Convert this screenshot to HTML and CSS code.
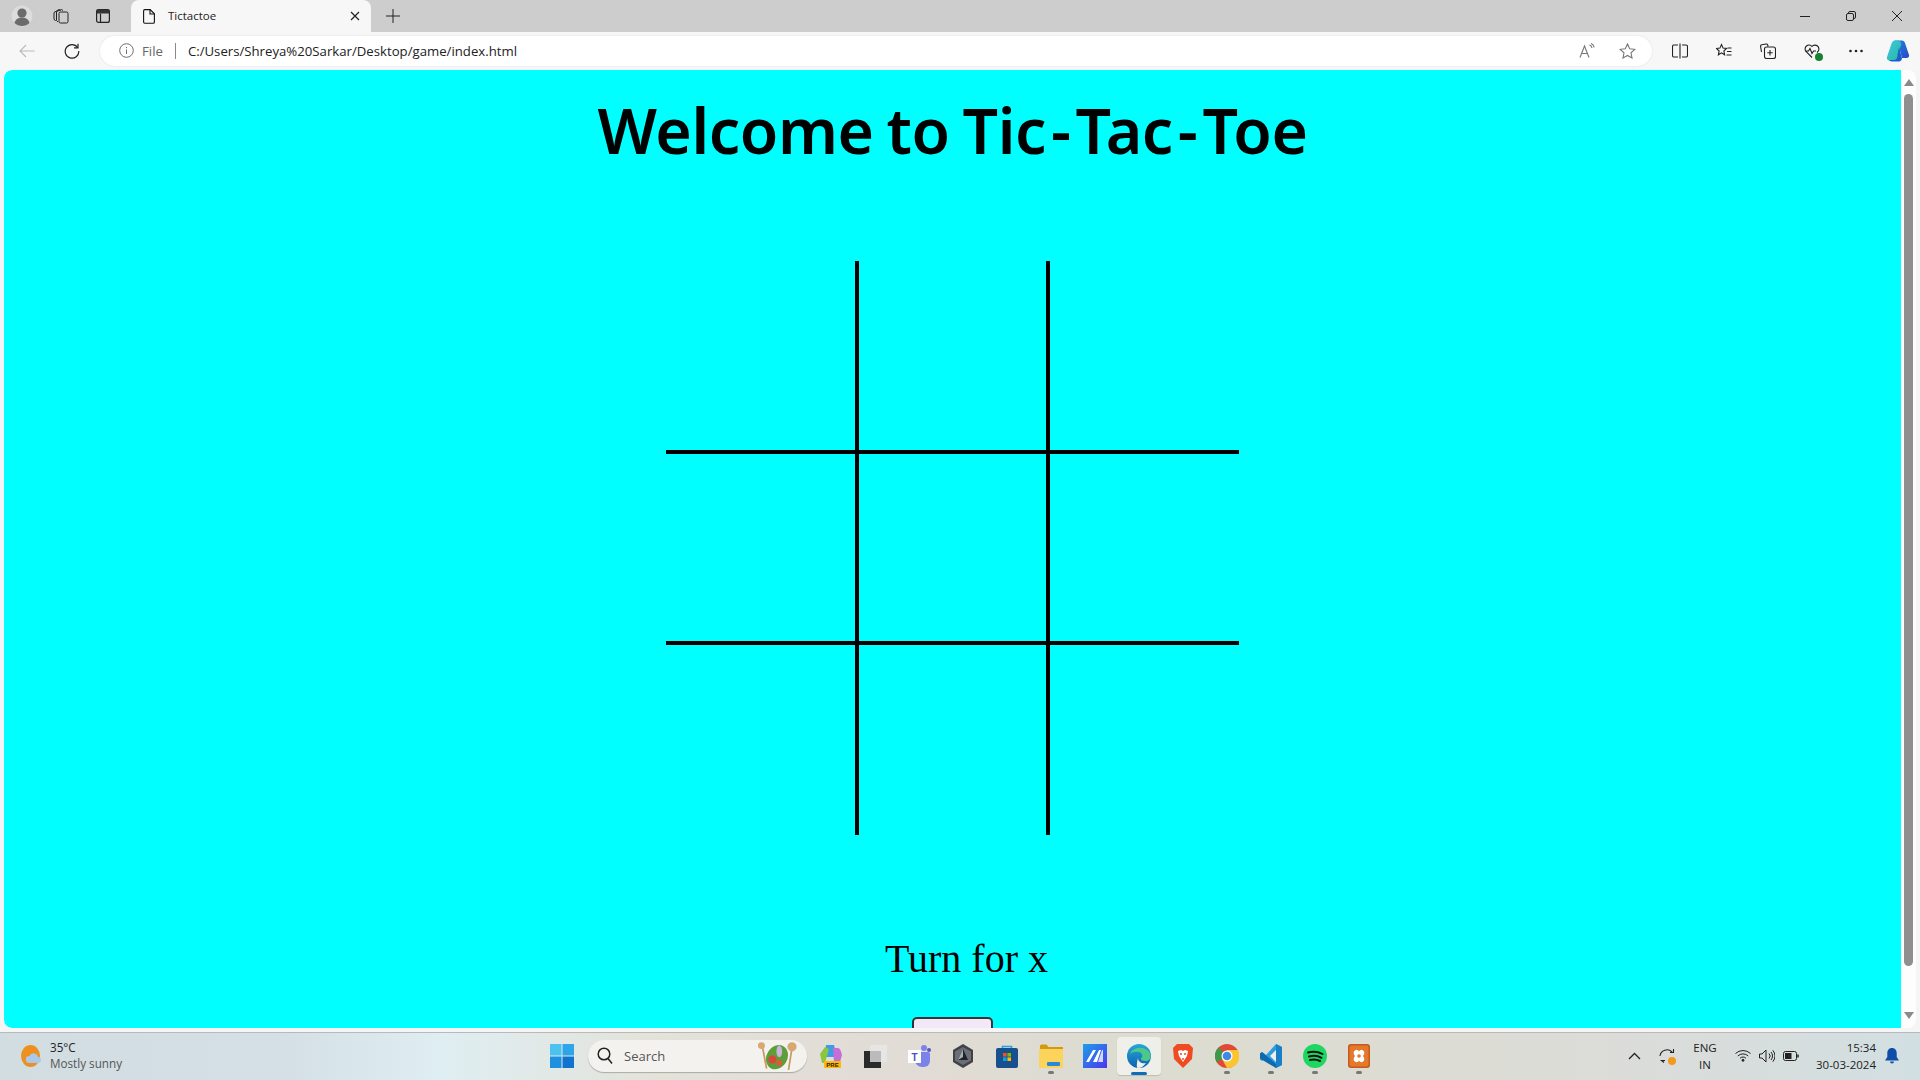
FILE: index.html
```html
<!DOCTYPE html>
<html lang="en">
<head>
    <meta charset="UTF-8">
    <meta name="viewport" content="width=device-width, initial-scale=1.0">
    <title>Tictactoe</title>
    <link rel="stylesheet" href="styles.css">
</head>
<body>
    <!-- tab strip -->
    <div class="tabstrip">
        <div class="strip-left">
            <span class="avatar">
                <svg width="22" height="22" viewBox="0 0 22 22"><circle cx="11" cy="11" r="10.500" fill="#dcdcdc"/><circle cx="11" cy="8" r="4.600" fill="#6b6b6b"/><path d="M3.500 18c1-4 4-5.500 7.500-5.500s6.500 1.500 7.500 5.500c-2 2-4.500 3-7.500 3s-5.500-1-7.500-3z" fill="#6b6b6b"/></svg>
            </span>
            <span class="strip-btn">
                <svg width="16" height="16" viewBox="0 0 16 16" fill="none" stroke="#222" stroke-width="1"><path d="M1 4.500l5-3 1.500 1"/><path d="M1 4.500v6.500l1.500 2"/><path d="M3.500 3.500l5-2 1.500 1"/><path d="M3.500 3.500v9l1.500 1.500"/><rect x="6" y="4" width="9" height="11" rx="1.500"/></svg>
            </span>
            <span class="strip-btn">
                <svg width="14" height="14" viewBox="0 0 14 14" fill="none" stroke="#222" stroke-width="1.200"><rect x=".6" y=".6" width="12.800" height="12.800" rx="2"/><path d="M4.500 4.500V13.400"/><rect x=".6" y=".6" width="12.800" height="3.900" fill="#333" stroke="none"/></svg>
            </span>
        </div>
        <div class="tab">
            <svg width="12" height="15" viewBox="0 0 12 15" fill="none" stroke="#111" stroke-width="1.100"><path d="M1.800.6h5.400l4.200 4.200v8.200a1.300 1.300 0 0 1-1.300 1.300H1.800A1.300 1.300 0 0 1 .6 13V1.900A1.300 1.300 0 0 1 1.800.6z"/><path d="M7 .8v4.200h4.200"/></svg>
            <span class="tab-title">Tictactoe</span>
            <svg class="tab-close" width="10" height="10" viewBox="0 0 10 10" stroke="#222" stroke-width="1.200"><path d="M1 1l8 8M9 1l-8 8"/></svg>
        </div>
        <span class="new-tab">
            <svg width="14" height="14" viewBox="0 0 14 14" stroke="#222" stroke-width="1"><path d="M7 0v14M0 7h14"/></svg>
        </span>
        <div class="win-controls">
            <svg width="10" height="10" viewBox="0 0 10 10" stroke="#222" stroke-width="1"><path d="M0 5.500h10"/></svg>
            <svg width="10" height="10" viewBox="0 0 10 10" fill="none" stroke="#222" stroke-width="1"><rect x=".5" y="2.500" width="7" height="7" rx="1.500"/><path d="M2.500 2.500V2a1.500 1.500 0 0 1 1.500-1.500h4A1.500 1.500 0 0 1 9.500 2v4a1.500 1.500 0 0 1-1.500 1.500h-.5"/></svg>
            <svg width="10" height="10" viewBox="0 0 10 10" stroke="#222" stroke-width="1"><path d="M0 0l10 10M10 0L0 10"/></svg>
        </div>
    </div>

    <!-- toolbar -->
    <div class="toolbar">
        <span class="tool-btn">
            <svg width="16" height="14" viewBox="0 0 16 14" fill="none" stroke="#b9b9b9" stroke-width="1.100"><path d="M15.500 7H1M7 1L1 7l6 6"/></svg>
        </span>
        <span class="tool-btn">
            <svg width="16" height="16" viewBox="0 0 16 16" fill="none" stroke="#222" stroke-width="1.200"><path d="M13.600 4.500A6.800 6.800 0 1 0 14.800 8"/><path d="M14 .8v4h-4"/></svg>
        </span>
        <div class="addressbar">
            <svg class="info-icon" width="15" height="15" viewBox="0 0 15 15" fill="none" stroke="#6f6f6f" stroke-width="1"><circle cx="7.500" cy="7.500" r="6.800"/><path d="M7.500 6.500v4.500M7.500 4v1.200"/></svg>
            <span class="scheme">File</span>
            <span class="divider"></span>
            <span class="url">C:/Users/Shreya%20Sarkar/Desktop/game/index.html</span>
            <span class="address-actions">
                <svg width="16" height="16" viewBox="0 0 16 16" fill="none" stroke="#777" stroke-width="1.100"><path d="M1 14.500L5.500 3l4.500 11.500M2.700 10.500h5.600"/><path d="M10.500 2c1.500.5 2.300 1.500 2.500 3M12 .5c1.800.7 2.800 2 3.200 3.800"/></svg>
                <svg width="17" height="16" viewBox="0 0 17 16" fill="none" stroke="#777" stroke-width="1.100"><path d="M8.500 1l2.200 4.700 5.100.6-3.800 3.500 1 5.100-4.500-2.500-4.500 2.500 1-5.100L1.200 6.300l5.100-.6z"/></svg>
            </span>
        </div>
        <div class="toolbar-icons">
            <svg width="16" height="16" viewBox="0 0 16 16" fill="none" stroke="#222" stroke-width="1.100"><path d="M6 2H2a1.500 1.500 0 0 0-1.500 1.500v9A1.500 1.500 0 0 0 2 14h4M10 2h4a1.500 1.500 0 0 1 1.500 1.500v9A1.500 1.500 0 0 1 14 14h-4M8 .5v15"/></svg>
            <svg width="16" height="16" viewBox="0 0 16 16" fill="none" stroke="#222" stroke-width="1.100"><path d="M5.500 1.500l1.600 3.600 3.400.4-2.600 2.500.7 3.800-3.100-1.900-3.100 1.900.7-3.800L.5 5.500l3.400-.4zM11.500 5h4M11 8.500h4.500M10.500 12h5"/></svg>
            <svg width="16" height="16" viewBox="0 0 16 16" fill="none" stroke="#222" stroke-width="1.100"><path d="M1.500 9L.6 3.500a1.500 1.500 0 0 1 1.200-1.700L6 1a1.500 1.500 0 0 1 1.700 1l.4 1.500"/><rect x="4.500" y="4" width="11" height="11.500" rx="2" fill="#f7f7f7"/><path d="M10 7v5.500M7.300 9.800h5.400"/></svg>
            <span class="health">
                <svg width="16" height="16" viewBox="0 0 16 16" fill="none" stroke="#222" stroke-width="1.100"><path d="M8 14.500L2 8.500A3.900 3.900 0 0 1 8 3.500a3.900 3.900 0 0 1 6 5L13 9.500M1 8h3.500L6 5.500 8 10.500 9.500 8H12"/></svg>
                <span class="health-badge"></span>
            </span>
            <svg width="16" height="16" viewBox="0 0 16 16" fill="#222"><circle cx="2.500" cy="8" r="1.300"/><circle cx="8" cy="8" r="1.300"/><circle cx="13.500" cy="8" r="1.300"/></svg>
        </div>
        <svg class="copilot" width="24" height="24" viewBox="0 0 24 24">
            <defs>
                <linearGradient id="copA" x1="0" y1="0" x2="1" y2="1"><stop offset="0" stop-color="#3ec8e8"/><stop offset="1" stop-color="#29b89a"/></linearGradient>
                <linearGradient id="copB" x1="0" y1="0" x2="1" y2="1"><stop offset="0" stop-color="#1f8ce0"/><stop offset="1" stop-color="#2a45c8"/></linearGradient>
            </defs>
            <path d="M9 1.500h7c1.500 0 2.500 1 3 2.500l4 12c.5 2-1 3-2.500 3H16L13 8c-.5-1.500-1.500-2-3-2H6z" fill="url(#copB)"/>
            <path d="M9 1.500C7 1.500 6 3 5.500 4.500L1 18c-.5 2 .5 3.500 2.500 3.500H8c1.500 0 2.500-1 3-2.500L15 6c.5-2-1-4.500-3-4.500z" fill="url(#copA)"/>
            <path d="M13 8l3 11.500c-.5 2-1.500 3-3 3H6c-1.500 0-2.500-1-3-1.500h5c1.500 0 2.500-1 3-2.500z" fill="#1a5fd0"/>
        </svg>
    </div>

    <!-- page -->
    <div class="viewport">
        <main class="page">
            <h1 class="title">Welcome to Tic<span class="dash">-</span>Tac<span class="dash">-</span>Toe</h1>
            <div class="board">
                <div class="cell line-r line-b"></div>
                <div class="cell line-r line-b"></div>
                <div class="cell line-b"></div>
                <div class="cell line-r line-b"></div>
                <div class="cell line-r line-b"></div>
                <div class="cell line-b"></div>
                <div class="cell line-r"></div>
                <div class="cell line-r"></div>
                <div class="cell"></div>
            </div>
            <p class="turn">Turn for x</p>
            <button class="reset" type="button" aria-label="Reset"></button>
        </main>
        <div class="scrollbar">
            <span class="arrow-up"></span>
            <span class="thumb"></span>
            <span class="arrow-down"></span>
        </div>
    </div>

    <!-- windows taskbar -->
    <footer class="taskbar">
        <div class="weather">
            <svg width="20" height="24" viewBox="0 0 20 24"><ellipse cx="9.500" cy="12" rx="9.500" ry="11" fill="#ee9020"/><path d="M8 19a3.500 3.500 0 0 1 .5-7 4.500 4.500 0 0 1 8.500 1 3 3 0 0 1 0 6z" fill="#a9c8ea"/></svg>
            <div class="weather-text">
                <span class="temp">35°C</span>
                <span class="sky">Mostly sunny</span>
            </div>
        </div>
        <div class="task-center">
            <svg class="start" width="24" height="24" viewBox="0 0 24 24"><rect width="11.500" height="11.500" fill="#4cc2f1"/><rect x="12.500" width="11.500" height="11.500" fill="#2ea4ea"/><rect y="12.500" width="11.500" height="11.500" fill="#1e90e0"/><rect x="12.500" y="12.500" width="11.500" height="11.500" fill="#0f74ce"/></svg>
            <div class="search">
                <svg width="16" height="17" viewBox="0 0 16 17" fill="none" stroke="#222" stroke-width="1.500"><circle cx="7" cy="7" r="5.800"/><path d="M11 11.500l4 5"/></svg>
                <span class="search-label">Search</span>
                <svg class="search-art" width="48" height="30" viewBox="0 0 34 26"><path d="M4 3l4 21" stroke="#c89a60" stroke-width="1.500"/><circle cx="3.500" cy="4" r="3" fill="#d8a870"/><path d="M30 6l-3 19" stroke="#c89a60" stroke-width="1.500"/><circle cx="30" cy="5" r="4" fill="#d8a870"/><ellipse cx="17" cy="14" rx="9" ry="11" fill="#5d9e3a" transform="rotate(30 17 14)"/><circle cx="13" cy="16" r="3.500" fill="#d8483a"/><circle cx="19" cy="19" r="2.500" fill="#e0583a"/><ellipse cx="19" cy="9" rx="2.500" ry="5" fill="#c9b6d8"/></svg>
            </div>
            <div class="task-apps">
                <span class="app">
                    <svg width="24" height="24" viewBox="0 0 24 24"><path d="M7 1h8l3 12H6z" fill="#3e9de8"/><path d="M1 10l5-7 4 2-4 14H3z" fill="#8cc63f"/><path d="M14 4h5c2 0 3 3 4 7l-2 7h-6z" fill="#c46fd8"/><rect x="5" y="17" width="17" height="7" rx="1" fill="#ffb900"/><text class="pre" x="13.500" y="23">PRE</text></svg>
                </span>
                <span class="app">
                    <svg width="24" height="24" viewBox="0 0 24 24"><rect x="1" y="7" width="17" height="17" fill="#2a2a2a"/><rect x="7" y="1" width="17" height="17" fill="#e8e8e8" opacity=".85"/><rect x="7" y="7" width="11" height="11" fill="#bbb"/></svg>
                </span>
                <span class="app">
                    <svg width="24" height="24" viewBox="0 0 24 24"><circle cx="17" cy="4" r="3" fill="#7b83eb"/><circle cx="22" cy="6" r="2" fill="#5059c9"/><path d="M8 8h13a2 2 0 0 1 2 2v7a6 6 0 0 1-6 6h-2a7 7 0 0 1-7-7z" fill="#7b83eb"/><rect x="1" y="6" width="13" height="13" fill="#fff"/><text class="teams-t" x="7.500" y="16.500">T</text></svg>
                </span>
                <span class="app">
                    <svg width="22" height="24" viewBox="0 0 22 24"><path d="M11 0l10 6v12l-10 6-10-6V6z" fill="#3f4347"/><path d="M11 3l8 4.500v9L11 21l-8-4.500v-9z" fill="#6a6f76"/><path d="M11 5l5 11H6z" fill="#1f2226"/><path d="M11 5l-5 11 5-3z" fill="#a8adb3"/></svg>
                </span>
                <span class="app">
                    <svg width="22" height="24" viewBox="0 0 22 24" fill="none"><path d="M6.500 5V2.500h9V5" stroke="#27a0e0" stroke-width="1.600"/><rect y="4" width="22" height="20" rx="2" fill="#17508c"/><rect x="7" y="9" width="3.600" height="3.600" fill="#f25022"/><rect x="11.400" y="9" width="3.600" height="3.600" fill="#7fba00"/><rect x="7" y="13.400" width="3.600" height="3.600" fill="#00a4ef"/><rect x="11.400" y="13.400" width="3.600" height="3.600" fill="#ffb900"/></svg>
                </span>
                <span class="app app-open">
                    <svg width="24" height="24" viewBox="0 0 24 24"><path d="M1 2a1.500 1.500 0 0 1 1.500-1.500h5l2 2.500H24v4H1z" fill="#d39a10"/><rect x="0" y="5" width="24" height="19" fill="#fcd45c"/><rect x="8" y="18" width="13" height="4" rx="1" fill="#2a88d8"/></svg>
                </span>
                <span class="app">
                    <svg width="24" height="24" viewBox="0 0 24 24"><defs><linearGradient id="mm" x1="0" y1="0" x2="1" y2="1"><stop offset="0" stop-color="#1f9fe8"/><stop offset="1" stop-color="#4a36f0"/></linearGradient></defs><rect width="24" height="24" fill="url(#mm)"/><path d="M3 18L10 6h3L6 18zM10 18l6-12h2l-4 12z" fill="#fff"/><path d="M15 18l4-12h1v12z" fill="#cfd8ff"/></svg>
                </span>
                <span class="app app-active">
                    <svg width="24" height="24" viewBox="0 0 24 24"><defs><linearGradient id="edgeB" x1="0" y1="0" x2="0" y2="1"><stop offset="0" stop-color="#2aa6d8"/><stop offset="1" stop-color="#0c62b0"/></linearGradient></defs><circle cx="12" cy="12" r="12" fill="url(#edgeB)"/><path d="M3 10C5 3 18 1 23 9c1.500 4 0 8-4 8-3 0-6-1-5-3 2-1 2-5-2-6-4-.5-7 0-9 2z" fill="#4cc98a"/><path d="M11 14c0 4 4 6 8 5-2 3-5 5-8 5-2 0-1-6 0-10z" fill="#f0f2ea"/></svg>
                    <i class="active-bar"></i>
                </span>
                <span class="app">
                    <svg width="20" height="24" viewBox="0 0 20 24"><path d="M4 0h12l4 4-1 11-9 9-9-9L0 4z" fill="#f04a23"/><path d="M5 7l3-1 2 1 2-1 3 1-1 5-2 3-2 3-2-3-2-3z" fill="#fff"/><path d="M7 10h2M11 10h2M9 15h2" stroke="#f04a23" stroke-width="1.500"/></svg>
                </span>
                <span class="app app-open">
                    <svg width="24" height="24" viewBox="0 0 24 24"><circle cx="12" cy="12" r="12" fill="#e0483a"/><path d="M12 12L1.600 18A12 12 0 0 1 3.500 3.500z" fill="#3a9a48"/><path d="M12 6h10.800a12 12 0 0 1-10.800 18L7 15z" fill="#fbc52f"/><circle cx="12" cy="12" r="5.500" fill="#fff"/><circle cx="12" cy="12" r="4.300" fill="#3c8ae8"/></svg>
                </span>
                <span class="app app-open">
                    <svg width="22" height="24" viewBox="0 0 22 24"><path d="M16 0l6 3v18l-6 3-10-10-4 3-2-1.500V9.500L2 8l4 3z" fill="#2a9ee0"/><path d="M16 6l-6 6 6 6z" fill="#f0f0ea"/><path d="M16 0l6 3v18l-6 3z" fill="#1b7fc8"/><path d="M0 9.500L2 8l14 12v4L0 14.500z" fill="#0d6ab0"/></svg>
                </span>
                <span class="app app-open">
                    <svg width="24" height="24" viewBox="0 0 24 24" fill="none"><circle cx="12" cy="12" r="12" fill="#1ed760"/><path d="M5 8.500c5-1.500 10-1 14.500 1.500M6 12.500c4-1 9-.8 12.500 1.300M7 16c3.500-.8 7-.5 10 1" stroke="#111" stroke-width="2" stroke-linecap="round"/></svg>
                </span>
                <span class="app app-open">
                    <svg width="22" height="24" viewBox="0 0 22 24"><rect width="22" height="24" rx="3" fill="#c9581c"/><rect x="1.500" y="1.500" width="19" height="21" rx="2" fill="#e2792d"/><path d="M7 6.500a2.500 2.500 0 0 1 4 1 2.500 2.500 0 0 1 4-1c2 1 1.500 3.500 0 5.500 1.500 2 2 4.500 0 5.500a2.500 2.500 0 0 1-4-1 2.500 2.500 0 0 1-4 1c-2-1-1.500-3.500 0-5.500-1.500-2-2-4.500 0-5.500z" fill="#fff"/><circle cx="11" cy="12" r="1.800" fill="#e2792d"/></svg>
                </span>
            </div>
        </div>
        <div class="tray">
            <svg width="13" height="8" viewBox="0 0 13 8" fill="none" stroke="#222" stroke-width="1.300"><path d="M1 7l5.500-5.500L12 7"/></svg>
            <span class="sync">
                <svg width="16" height="16" viewBox="0 0 16 16" fill="none" stroke="#222" stroke-width="1.100"><path d="M1 8a7 7 0 0 1 12-4M14.500 1v3.500H11M5 14.500l-2.500-2h3.500"/></svg>
                <i class="sync-dot"></i>
            </span>
            <span class="lang">ENG<br>IN</span>
            <span class="tray-icons">
                <svg width="16" height="13" viewBox="0 0 16 13" fill="none" stroke="#222" stroke-width="1"><path d="M.5 4.500a11 11 0 0 1 15 0M2.800 7a7.500 7.500 0 0 1 10.400 0M5 9.300a4.200 4.200 0 0 1 6 0"/><circle cx="8" cy="11.300" r="1" fill="#222"/></svg>
                <svg width="16" height="14" viewBox="0 0 16 14" fill="none" stroke="#222" stroke-width="1"><path d="M.5 5h2.500l4-4v12l-4-4H.5zM10 4.500a3.500 3.500 0 0 1 0 5M12 3a6 6 0 0 1 0 8M13.800 1.300a8.500 8.500 0 0 1 0 11.400"/></svg>
                <svg width="16" height="10" viewBox="0 0 16 10" fill="none" stroke="#222" stroke-width="1"><rect x=".5" y=".5" width="13" height="9" rx="2"/><rect x="2" y="2" width="6.500" height="6" fill="#222" stroke="none"/><path d="M15 3.500v3" stroke-width="1.500"/></svg>
            </span>
            <span class="clock">15:34<br>30-03-2024</span>
            <svg width="14" height="16" viewBox="0 0 14 16" fill="#0f4ea8"><path d="M7 0c3 0 4.700 2.200 4.700 5v4l2.300 3.500H0L2.300 9V5C2.300 2.200 4 0 7 0z"/><path d="M5 13.500h4a2 2 0 0 1-4 0z"/></svg>
        </div>
    </footer>
</body>
</html>
```

FILE: styles.css
```css
* {
    box-sizing: border-box;
}
html, body {
    height: 100%;
}
body {
    margin: 0;
    overflow: hidden;
    font-family: "Open Sans", "Noto Sans", sans-serif;
    background-color: #f5f5f5;
    display: flex;
    flex-direction: column;
}

/* tab strip */
.tabstrip {
    height: 32px;
    flex: none;
    background-color: #cdcdcd;
    display: flex;
    align-items: flex-end;
}
.strip-left {
    width: 131px;
    height: 32px;
    padding-left: 11px;
    display: flex;
    align-items: center;
}
.avatar {
    display: flex;
}
.strip-btn {
    display: flex;
    justify-content: center;
    width: 16px;
}
.strip-left .strip-btn:nth-child(2) {
    margin-left: 20px;
}
.strip-left .strip-btn:nth-child(3) {
    margin-left: 26px;
}
.tab {
    width: 240px;
    height: 32px;
    background-color: #f7f7f7;
    border-radius: 8px 8px 0 0;
    padding: 0 11px 0 12px;
    display: flex;
    align-items: center;
}
.tab-title {
    margin-left: 13px;
    padding-bottom: 1px;
    font-size: 11.500px;
    color: #222;
    flex: 1;
}
.new-tab {
    margin-left: 15px;
    height: 32px;
    display: flex;
    align-items: center;
}
.win-controls {
    margin-left: auto;
    height: 32px;
    padding-right: 18px;
    display: flex;
    align-items: center;
    gap: 36px;
}

/* toolbar */
.toolbar {
    height: 38px;
    flex: none;
    background-color: #f7f7f7;
    display: flex;
    align-items: center;
    padding-bottom: 1px;
}
.tool-btn {
    width: 16px;
    display: flex;
    margin-left: 19px;
}
.tool-btn + .tool-btn {
    margin-left: 29px;
}
.addressbar {
    width: 1552px;
    height: 30px;
    margin-left: 20px;
    background-color: #fff;
    border-radius: 15px;
    box-shadow: 0 0 2px rgba(0, 0, 0, .12);
    display: flex;
    align-items: center;
    padding: 0 16px 0 19px;
    font-size: 13.200px;
}
.scheme {
    margin-left: 8px;
    color: #666;
}
.divider {
    width: 1px;
    height: 16px;
    margin: 0 12px;
    background-color: #8a8a8a;
}
.url {
    color: #222;
}
.address-actions {
    margin-left: auto;
    display: flex;
    align-items: center;
    gap: 24px;
}
.toolbar-icons {
    margin-left: 20px;
    display: flex;
    align-items: center;
    gap: 28px;
}
.health {
    position: relative;
    display: flex;
}
.health-badge {
    position: absolute;
    right: -3px;
    bottom: -2px;
    width: 8px;
    height: 8px;
    border-radius: 50%;
    background-color: #16812f;
}
.copilot {
    margin-left: 22px;
}

/* page */
.viewport {
    flex: none;
    height: 958px;
    margin-left: 4px;
    width: 1912px;
    display: flex;
    background-color: #fdfdfd;
    border-radius: 8px;
    overflow: hidden;
}
.page {
    width: 1897px;
    height: 958px;
    overflow: hidden;
    background-color: #0ff;
    display: flex;
    flex-direction: column;
    align-items: center;
    border-radius: 8px 0 0 8px;
}
.page > * {
    flex: none;
}
.title {
    margin: 14px 0 0;
    height: 99px;
    font-family: "Noto Sans", sans-serif;
    font-weight: 600;
    font-size: 62.500px;
    letter-spacing: -0.4px;
    word-spacing: -3px;
    line-height: 92px;
    color: #000;
}
.dash {
    margin: 0 5px;
}
.board {
    margin-top: 78px;
    display: grid;
    grid-template-columns: 193px 191px 189px;
    grid-template-rows: 193px 191px 190px;
}
.line-r {
    border-right: 4px solid #000;
}
.line-b {
    border-bottom: 4px solid #000;
}
.turn {
    margin: 101px 0 0 28px;
    font-family: "Liberation Serif", serif;
    font-size: 40px;
    line-height: 46px;
    color: #000;
}
.reset {
    margin-top: 35px;
    width: 81px;
    height: 40px;
    border: 2px solid #333;
    border-radius: 5px;
    background-color: #f3e8f8;
}
.scrollbar {
    width: 15px;
    position: relative;
}
.arrow-up, .arrow-down {
    position: absolute;
    left: 3px;
    width: 0;
    height: 0;
    border-left: 5px solid transparent;
    border-right: 5px solid transparent;
}
.arrow-up {
    top: 9px;
    border-bottom: 7px solid #8a8a8a;
}
.arrow-down {
    bottom: 9px;
    border-top: 7px solid #8a8a8a;
}
.thumb {
    position: absolute;
    left: 3px;
    top: 24px;
    width: 9px;
    height: 872px;
    border-radius: 5px;
    background-color: #8f8f8f;
}

/* taskbar */
.taskbar {
    margin-top: 4px;
    flex: 1;
    padding-bottom: 2px;
    border-top: 1px solid #b8baba;
    background: linear-gradient(90deg, #d2dde2 0%, #d4e0e5 15%, #dfeef2 23%, #e3e3da 34%, #e2dcd6 45%, #dcdcd0 60%, #dcdcd4 75%, #dcdcd8 83%, #d2dfe2 100%);
    display: flex;
    align-items: center;
    font-size: 12px;
    color: #222;
}
.weather {
    width: 550px;
    padding-left: 21px;
    display: flex;
    align-items: center;
    gap: 9px;
}
.weather-text {
    display: flex;
    flex-direction: column;
    padding-bottom: 2px;
    font-size: 11.700px;
    line-height: 16px;
}
.sky {
    color: #555;
}
.task-center {
    display: flex;
    align-items: center;
}
.search {
    width: 219px;
    height: 32px;
    margin-left: 14px;
    border-radius: 16px;
    background-color: #f4f2ee;
    box-shadow: 0 1px 1px rgba(0, 0, 0, .25);
    display: flex;
    align-items: center;
    padding: 0 0 0 9px;
}
.search-label {
    margin-left: 11px;
    font-size: 13px;
    color: #555;
}
.search-art {
    margin-left: auto;
    margin-right: 6px;
}
.task-apps {
    display: flex;
    margin-left: 2px;
}
.app {
    width: 44px;
    height: 38px;
    display: flex;
    align-items: center;
    justify-content: center;
    position: relative;
}
.pre {
    font-family: "Liberation Sans", sans-serif;
    font-size: 6px;
    font-weight: 700;
    text-anchor: middle;
    fill: #222;
}
.teams-t {
    font-family: "Liberation Sans", sans-serif;
    font-size: 10px;
    font-weight: 700;
    text-anchor: middle;
    fill: #4b53bc;
}
.app-open::after {
    content: "";
    position: absolute;
    bottom: 1px;
    left: 19px;
    width: 6px;
    height: 3px;
    border-radius: 2px;
    background-color: #777;
}
.app-active {
    background-color: rgba(255, 255, 255, .55);
    border-radius: 4px;
    box-shadow: 0 1px 1px rgba(0, 0, 0, .15);
}
.active-bar {
    position: absolute;
    bottom: 0;
    left: 14px;
    width: 16px;
    height: 3px;
    border-radius: 2px;
    background-color: #0f6cbd;
}
.tray {
    margin-left: auto;
    padding-right: 21px;
    display: flex;
    align-items: center;
}
.sync {
    position: relative;
    display: flex;
    margin-left: 18px;
}
.sync-dot {
    position: absolute;
    right: -1px;
    bottom: -1px;
    width: 8px;
    height: 8px;
    border-radius: 50%;
    background-color: #f39a1d;
}
.lang {
    margin-left: 18px;
    width: 24px;
    text-align: center;
    font-size: 11.500px;
    line-height: 17px;
}
.tray-icons {
    margin-left: 18px;
    display: flex;
    align-items: center;
    gap: 8px;
}
.clock {
    margin-left: 17px;
    text-align: right;
    font-size: 11.500px;
    line-height: 17px;
}
.clock + svg {
    margin-left: 9px;
}
```
